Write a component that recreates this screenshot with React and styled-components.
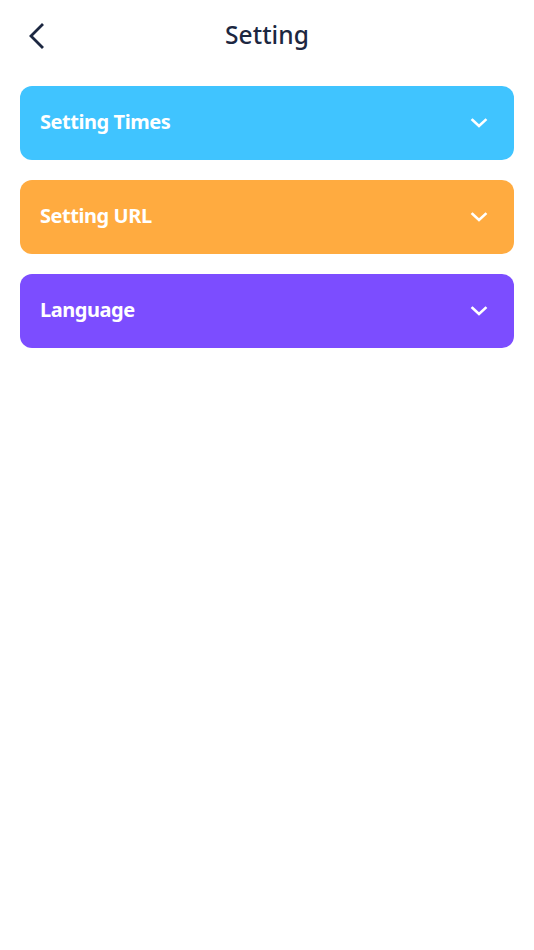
import React from "react";
import styled, { createGlobalStyle } from "styled-components";

const Global = createGlobalStyle`
  html, body { margin: 0; padding: 0; background: #ffffff; }
  body { font-family: "Noto Sans", "Open Sans", sans-serif; }
`;

const Page = styled.div`
  width: 534px;
  min-height: 950px;
  background: #fff;
  display: flex;
  flex-direction: column;
`;

const Header = styled.header`
  position: relative;
  height: 70px;
  display: flex;
  align-items: center;
  justify-content: center;
`;

const BackButton = styled.button`
  position: absolute;
  left: 20px;
  top: 19px;
  width: 34px;
  height: 34px;
  border: 0;
  background: transparent;
  padding: 0;
  display: flex;
  align-items: center;
  justify-content: center;
  color: #1c2741;
`;

const Title = styled.h1`
  margin: 0 0 2px 0;
  font-size: 24.5px;
  font-weight: 500;
  color: #1c2741;
  letter-spacing: 0.1px;
`;

const List = styled.div`
  display: flex;
  flex-direction: column;
  gap: 20px;
  padding: 16px 20px 0;
`;

const Card = styled.div`
  height: 74px;
  border-radius: 12px;
  background: ${(p) => p.$bg};
  display: flex;
  align-items: center;
  justify-content: space-between;
  padding: 0 26px 0 20px;
`;

const Label = styled.span`
  font-size: 20px;
  line-height: 1;
  font-weight: 700;
  color: #fff;
  letter-spacing: -0.45px;
  margin-bottom: 2px;
`;

const Chevron = () => (
  <svg width="18" height="18" viewBox="0 0 18 18" fill="none">
    <path d="M2.5 6 L9 12 L15.5 6" stroke="#fff" strokeWidth="2.6" strokeLinecap="square" strokeLinejoin="miter" />
  </svg>
);

const items = [
  { label: "Setting Times", bg: "#40C4FF" },
  { label: "Setting URL", bg: "#FFAB40" },
  { label: "Language", bg: "#7C4DFF" },
];

export default function App() {
  return (
    <Page>
      <Global />
      <Header>
        <BackButton aria-label="back">
          <svg width="20" height="28" viewBox="0 0 20 28" fill="none">
            <path d="M15 3 L4 14 L15 25" stroke="#1c2741" strokeWidth="2.8" strokeLinecap="square" />
          </svg>
        </BackButton>
        <Title>Setting</Title>
      </Header>
      <List>
        {items.map((it) => (
          <Card key={it.label} $bg={it.bg}>
            <Label>{it.label}</Label>
            <Chevron />
          </Card>
        ))}
      </List>
    </Page>
  );
}
